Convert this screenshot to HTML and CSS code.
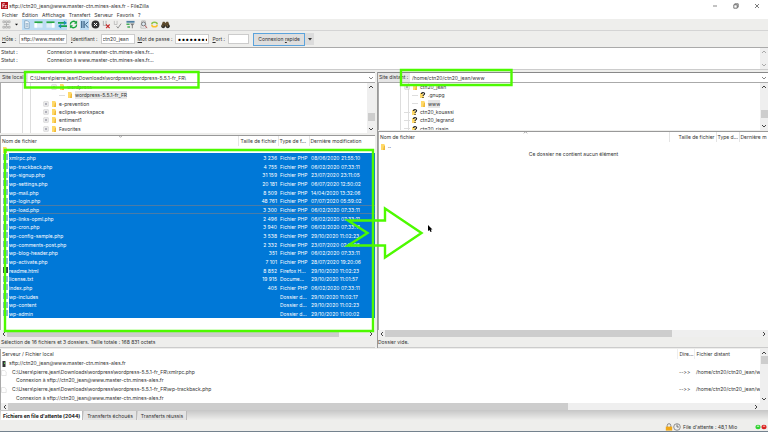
FILE: index.html
```html
<!DOCTYPE html>
<html lang="fr">
<head>
<meta charset="utf-8">
<title>sftp://ctn20_jean@www.master-ctn.mines-ales.fr - FileZilla</title>
<link rel="stylesheet" href="styles.css">
</head>
<body>
<svg class="defs" aria-hidden="true">
  <symbol id="up" viewBox="0 0 6 6"><path d="M1 4 3 2l2 2" fill="none" stroke="currentColor"/></symbol>
  <symbol id="down" viewBox="0 0 6 6"><path d="M1 2l2 2 2-2" fill="none" stroke="currentColor"/></symbol>
  <symbol id="left" viewBox="0 0 6 6"><path d="M4 1 2 3l2 2" fill="none" stroke="currentColor"/></symbol>
  <symbol id="right" viewBox="0 0 6 6"><path d="M2 1l2 2-2 2" fill="none" stroke="currentColor"/></symbol>
  <symbol id="folder" viewBox="0 0 6 6"><path d="M1 0h3l1 1v5H1z" fill="#ffd968"/><path d="M4 2h1v4H3z" fill="#f0b93a"/></symbol>
  <symbol id="plus" viewBox="0 0 6 6"><path d="M.8.8h4.4v4.4H.8z" fill="#fff" stroke="#bbb" stroke-width=".6"/><path d="M1.8 3h2.4M3 1.8v2.4" stroke="#667" stroke-width=".6"/></symbol>
  <symbol id="ask" viewBox="0 0 6 6"><path d="M0 1h3l1 5H0z" fill="#ffd968"/><path d="M1.4 2C1.4.2 4.6.2 4.6 1.8 4.6 3 3 2.8 3 4.1M3 4.9v1" fill="none" stroke="#222" stroke-width="1.1"/></symbol>
  <symbol id="page" viewBox="0 0 6 6"><path d="M.5.5h3.2l1.5 1.4v3.6H.5z" fill="#fff" stroke="#ccc" stroke-width=".5"/></symbol>
</svg>
<div class="window">
  <header class="titlebar">
    <svg class="logo" viewBox="0 0 8 8"><path d="M0 0h8v8H0z" fill="#b5121b"/><path d="M2 6.5V2h2.4M2 4h2M4.6 4H6.4L4.4 6.4h2.2" fill="none" stroke="#fff" stroke-width=".8"/></svg>
    <h1>sftp://ctn20_jean@www.master-ctn.mines-ales.fr - FileZilla</h1>
    <div class="winbtns">
      <button aria-label="Réduire"><svg viewBox="0 0 6 6"><path d="M1 3h4" stroke="#555" stroke-width=".7"/></svg></button>
      <button aria-label="Restaurer"><svg viewBox="0 0 6 6"><path d="M.8 1.8h3.4v3.4H.8zM1.8 1.6V.8h3.4v3.4h-.8" fill="none" stroke="#444" stroke-width=".7"/></svg></button>
      <button aria-label="Fermer"><svg viewBox="0 0 6 6"><path d="M1 1l4 4M5 1 1 5" stroke="#444" stroke-width=".7"/></svg></button>
    </div>
  </header>
  <nav class="menu">
    <button>Fichier</button><button>Édition</button><button>Affichage</button><button>Transfert</button><button>Serveur</button><button>Favoris</button><button>?</button>
  </nav>
  <div class="toolbar">
    <button aria-label="Gestionnaire de sites"><svg viewBox="0 0 10 10"><path d="M1 1h2v2H1zM4 1h2v2H4zM7 1h2v2H7zM1 7h2v2H1zM4 7h2v2H4zM7 7h2v2H7zM2 5h6M5 3v4" fill="none" stroke="#999" stroke-width=".7"/></svg></button>
    <button class="caret" aria-label="Liste des sites"><svg viewBox="0 0 4 10"><path d="M0 4h4L2 6.4z" fill="#111"/></svg></button>
    <div class="toggles">
      <button aria-label="Journal"><svg viewBox="0 0 10 10"><path d="M3 .8h3l2 2v6.4H3z" fill="#eef5fb" stroke="#6b90ad" stroke-width=".7"/><path d="M4 4h3M4 5.5h3M4 7h3" stroke="#5585a8" stroke-width=".6"/></svg></button>
      <button aria-label="Arborescence locale"><svg viewBox="0 0 10 10"><path d="M.5 1.5h9v7h-9z" fill="#dfeefa"/><path d="M.5 1.5h9v2h-9z" fill="#27a844"/><path d="M.5 3.5h3v5h-3z" fill="#fff"/></svg></button>
      <button aria-label="Arborescence distante"><svg viewBox="0 0 10 10"><path d="M.5 1.5h9v7h-9z" fill="#dfeefa"/><path d="M.5 1.5h9v2h-9z" fill="#27a844"/><path d="M6.500 3.500h3v5h-3z" fill="#fff"/></svg></button>
      <button aria-label="File d'attente"><svg viewBox="0 0 10 10"><path d="M0 3.200h8M2 6.800h8" stroke="#19a34a" stroke-width="2"/><path d="M6.500 .6v5L10 3.200zM3.500 4.400V9.400L0 6.800z" fill="#1a8fb0"/></svg></button>
    </div>
    <button aria-label="Actualiser"><svg viewBox="0 0 10 10"><path d="M1.500 5a3.500 3.500 0 0 1 6-2.500M8.500 5a3.500 3.500 0 0 1-6 2.500" fill="none" stroke="#1aa53c" stroke-width="1.500"/><path d="M9 .6v3.600H5.600zM1 9.400V5.800h3.400z" fill="#1aa53c"/></svg></button>
    <button class="on" aria-label="Traiter la file"><svg viewBox="0 0 10 10"><path d="M2 1v8M4.500 1v8" stroke="#234e73" stroke-width="1.200"/><path d="M6 5l3-3M6 5l3 3.500" stroke="#234e73"/></svg></button>
    <button aria-label="Annuler"><svg viewBox="0 0 10 10"><circle cx="5" cy="5" r="4.400" fill="#333"/><path d="M3.300 3.300l3.400 3.400M6.700 3.300 3.300 6.700" stroke="#fff" stroke-width="1.100"/></svg></button>
    <button aria-label="Déconnecter"><svg viewBox="0 0 10 10"><path d="M1.500 1v5h3V1" fill="none" stroke="#999" stroke-width=".8"/><path d="M4.500 5l4 4M8.500 5l-4 4" stroke="#c62828" stroke-width="1.200"/></svg></button>
    <button aria-label="Reconnecter"><svg viewBox="0 0 10 10"><path d="M1.500 1v4h3V1" fill="none" stroke="#aaa" stroke-width=".7"/><path d="M4 7l1.500 2L9 4" fill="none" stroke="#888"/></svg></button>
    <button class="gap" aria-label="Filtres"><svg viewBox="0 0 10 10"><path d="M.5 1h9v2h-9z" fill="#4d7fa3"/><path d="M.5 4h3.500v1.600H.5zM1.500 7h3v1.500h-3z" fill="#49ad58"/><path d="M4.500 4h5L7.500 6v3.200h-1V6z" fill="#777"/></svg></button>
    <button class="gap" aria-label="Rechercher"><svg viewBox="0 0 10 10"><path d="M2 9 3 1h4l1 8z" fill="#f2f2f2" stroke="#999" stroke-width=".6"/><circle cx="5" cy="4.400" r="2.200" fill="#dce9f2" stroke="#555" stroke-width=".8"/><path d="M6.500 6 9 9" stroke="#b55"/></svg></button>
    <button aria-label="Synchroniser"><svg viewBox="0 0 10 10"><path d="M2 4.800a3 2.400 0 0 1 6 0" fill="none" stroke="#8bc34a" stroke-width="1.600"/><path d="M8 5.200a3 2.400 0 0 1-6 0" fill="none" stroke="#fbc02d" stroke-width="1.600"/></svg></button>
    <button aria-label="Trouver"><svg viewBox="0 0 10 10"><path d="M2 2h2l.6 1h.8L6 2h2l1.800 5H.2z" fill="#5f4b2c"/><circle cx="2.500" cy="7" r="2.100" fill="#33302b"/><circle cx="7.500" cy="7" r="2.100" fill="#33302b"/><path d="M1.500 6.500h1.200M6.500 6.500h1.200" stroke="#d6a545" stroke-width=".8"/></svg></button>
  </div>
  <form class="quick">
    <label for="host"><u>H</u>ôte :</label><input id="host" class="w-host" value="sftp://www.master">
    <label for="user"><u>I</u>dentifiant :</label><input id="user" class="w-user" value="ctn20_jean">
    <label for="pass"><u>M</u>ot de passe :</label><input id="pass" class="w-pass" type="password" value="motdepass">
    <label for="port"><u>P</u>ort :</label><input id="port" class="w-port">
    <button type="button" class="connect">Connexion <u>r</u>apide</button><button type="button" class="drop" aria-label="Historique"><svg viewBox="0 0 6 6"><path d="M1 2h4L3 4.400z" fill="#333"/></svg></button>
  </form>
  <section class="log">
    <dl>
      <dt>Statut :</dt><dd>Connexion à www.master-ctn.mines-ales.fr...</dd>
      <dt>Statut :</dt><dd>Connexion à www.master-ctn.mines-ales.fr...</dd>
    </dl>
    <div class="vbar pale"><svg><use href="#up"/></svg><span class="grow"></span><svg><use href="#down"/></svg></div>
  </section>
  <main class="panes">
    <section class="pane local">
      <div class="site"><label for="lsite">Site local :</label><select id="lsite"><option>C:\Users\pierre.jean\Downloads\wordpress\wordpress-5.5.1-fr_FR\</option></select><svg class="chev"><use href="#down"/></svg></div>
      <div class="tree">
        <ul>
          <li class="d2"><svg><use href="#plus"/></svg><svg><use href="#folder"/></svg><span>wordpress</span></li>
          <li class="d3"><i></i><svg><use href="#folder"/></svg><span class="sel">wordpress-5.5.1-fr_FR</span></li>
          <li class="d1"><svg><use href="#plus"/></svg><svg><use href="#folder"/></svg><span>e-prevention</span></li>
          <li class="d1"><svg><use href="#plus"/></svg><svg><use href="#folder"/></svg><span>eclipse-workspace</span></li>
          <li class="d1"><svg><use href="#plus"/></svg><svg><use href="#folder"/></svg><span>entiment1</span></li>
          <li class="d1"><svg><use href="#plus"/></svg><svg><use href="#folder"/></svg><span>Favorites</span></li>
        </ul>
        <div class="vbar"><svg><use href="#up"/></svg><span class="grow"></span><b class="thumb"></b><span class="foot"></span><svg><use href="#down"/></svg></div>
      </div>
      <div class="files">
        <table>
          <colgroup><col class="c-icon"><col><col class="c-size"><col class="c-type"><col class="c-date"></colgroup>
          <thead><tr><th colspan="2">Nom de fichier<svg class="sort"><use href="#down"/></svg></th><th class="num">Taille de fichier</th><th>Type de f...</th><th>Dernière modification</th></tr>
          <tr class="parent"><td colspan="5"><svg><use href="#folder"/></svg></td></tr></thead>
          <tbody>
            <tr><td></td><td>xmlrpc.php</td><td>3 236</td><td>Fichier PHP</td><td>08/06/2020 21:55:10</td></tr>
            <tr><td></td><td>wp-trackback.php</td><td>4 755</td><td>Fichier PHP</td><td>06/02/2020 07:33:11</td></tr>
            <tr><td></td><td>wp-signup.php</td><td>31 159</td><td>Fichier PHP</td><td>23/07/2020 23:11:05</td></tr>
            <tr><td></td><td>wp-settings.php</td><td>20 181</td><td>Fichier PHP</td><td>06/07/2020 12:50:02</td></tr>
            <tr><td></td><td>wp-mail.php</td><td>8 509</td><td>Fichier PHP</td><td>14/04/2020 13:32:06</td></tr>
            <tr><td></td><td>wp-login.php</td><td>48 761</td><td>Fichier PHP</td><td>07/07/2020 05:59:02</td></tr>
            <tr class="focus"><td></td><td>wp-load.php</td><td>3 300</td><td>Fichier PHP</td><td>06/02/2020 07:33:11</td></tr>
            <tr><td></td><td>wp-links-opml.php</td><td>2 496</td><td>Fichier PHP</td><td>06/02/2020 07:33:11</td></tr>
            <tr><td></td><td>wp-cron.php</td><td>3 940</td><td>Fichier PHP</td><td>06/02/2020 07:33:11</td></tr>
            <tr><td></td><td>wp-config-sample.php</td><td>3 538</td><td>Fichier PHP</td><td>29/10/2020 11:02:23</td></tr>
            <tr><td></td><td>wp-comments-post.php</td><td>2 332</td><td>Fichier PHP</td><td>23/07/2020 02:11:05</td></tr>
            <tr><td></td><td>wp-blog-header.php</td><td>351</td><td>Fichier PHP</td><td>06/02/2020 07:33:11</td></tr>
            <tr><td></td><td>wp-activate.php</td><td>7 101</td><td>Fichier PHP</td><td>28/07/2020 19:20:06</td></tr>
            <tr class="html"><td></td><td>readme.html</td><td>8 852</td><td>Firefox H...</td><td>29/10/2020 11:02:23</td></tr>
            <tr><td></td><td>license.txt</td><td>19 915</td><td>Docume...</td><td>29/10/2020 11:01:57</td></tr>
            <tr><td></td><td>index.php</td><td>405</td><td>Fichier PHP</td><td>06/02/2020 07:33:11</td></tr>
            <tr><td></td><td>wp-includes</td><td></td><td>Dossier d...</td><td>29/10/2020 11:02:17</td></tr>
            <tr><td></td><td>wp-content</td><td></td><td>Dossier d...</td><td>29/10/2020 11:02:23</td></tr>
            <tr><td></td><td>wp-admin</td><td></td><td>Dossier d...</td><td>29/10/2020 11:00:02</td></tr>
          </tbody>
        </table>
      </div>
      <div class="hbar"><svg><use href="#left"/></svg><b class="t-local"></b><span class="grow"></span><svg><use href="#right"/></svg></div>
      <p class="state">Sélection de 16 fichiers et 3 dossiers. Taille totale : 168 831 octets</p>
    </section>
    <section class="pane remote">
      <div class="site"><label for="rsite">Site distant :</label><select id="rsite"><option>/home/ctn20/ctn20_jean/www</option></select><svg class="chev"><use href="#down"/></svg></div>
      <div class="tree">
        <ul>
          <li class="d1"><svg><use href="#plus"/></svg><svg><use href="#folder"/></svg><span>ctn20_jean</span></li>
          <li class="d2"><i></i><svg><use href="#ask"/></svg><span>.gnupg</span></li>
          <li class="d2"><i></i><svg><use href="#folder"/></svg><span class="sel">www</span></li>
          <li class="d1"><i></i><svg><use href="#ask"/></svg><span>ctn20_kouassi</span></li>
          <li class="d1"><i></i><svg><use href="#ask"/></svg><span>ctn20_legrand</span></li>
          <li class="d1"><i></i><svg><use href="#ask"/></svg><span>ctn20_rissin</span></li>
        </ul>
        <div class="vbar"><svg><use href="#up"/></svg><span class="grow"></span><b class="thumb"></b><span class="foot"></span><svg><use href="#down"/></svg></div>
      </div>
      <div class="files">
        <table>
          <colgroup><col><col class="c-size"><col class="c-type"><col class="c-date"></colgroup>
          <thead><tr><th>Nom de fichier<svg class="sort"><use href="#up"/></svg></th><th class="num">Taille de fichier</th><th>Type d...</th><th>Dernière m</th></tr></thead>
          <tbody><tr><td colspan="4"><svg><use href="#folder"/></svg>..</td></tr></tbody>
        </table>
        <p class="empty">Ce dossier ne contient aucun élément</p>
      </div>
      <div class="hbar"><svg><use href="#left"/></svg><b class="t-remote"></b><span class="grow"></span><svg><use href="#right"/></svg></div>
      <p class="state">Dossier vide.</p>
    </section>
  </main>
  <section class="queue">
    <div class="qmain">
      <table>
        <colgroup><col><col class="q-dir"><col class="q-remote"></colgroup>
        <thead><tr><th>Serveur / Fichier local</th><th>Dire...</th><th>Fichier distant</th></tr></thead>
        <tbody>
          <tr><td><svg viewBox="0 0 6 6"><path d="M1.500 0h3v6h-3z" fill="#333"/><path d="M3 1.500h1V3H3z" fill="#5c5"/></svg>sftp://ctn20_jean@www.master-ctn.mines-ales.fr</td><td></td><td></td></tr>
          <tr><td><svg class="wide"><use href="#page"/></svg>C:\Users\pierre.jean\Downloads\wordpress\wordpress-5.5.1-fr_FR\xmlrpc.php</td><td>--&gt;&gt;</td><td>/home/ctn20/ctn20_jean/w</td></tr>
          <tr><td class="sub">Connexion à sftp://ctn20_jean@www.master-ctn.mines-ales.fr</td><td></td><td></td></tr>
          <tr><td><svg class="wide"><use href="#page"/></svg>C:\Users\pierre.jean\Downloads\wordpress\wordpress-5.5.1-fr_FR\wp-trackback.php</td><td>--&gt;&gt;</td><td>/home/ctn20/ctn20_jean/w</td></tr>
          <tr><td class="sub">Connexion à sftp://ctn20_jean@www.master-ctn.mines-ales.fr</td><td></td><td></td></tr>
        </tbody>
      </table>
      <div class="vbar"><svg><use href="#up"/></svg><b class="thumb"></b><span class="grow"></span><svg><use href="#down"/></svg></div>
    </div>
    <div class="hbar"><svg><use href="#left"/></svg><b class="t-queue"></b><span class="grow"></span><svg><use href="#right"/></svg></div>
  </section>
  <div class="tabs"><button class="active">Fichiers en file d'attente (2044)</button><button>Transferts échoués</button><button>Transferts réussis</button></div>
  <footer class="statusbar">
    <svg viewBox="0 0 8 8"><path d="M2.200 4V2.500a1.800 1.800 0 0 1 3.600 0V4" fill="none" stroke="#888"/><path d="M.8 3.600h6.400v4H.8z" fill="#f0a818"/></svg>
    <svg viewBox="0 0 8 8"><circle cx="4" cy="4" r="3.300" fill="#eee" stroke="#777" stroke-width=".8"/><path d="M4 4V1.500M4 4h1.800" stroke="#555" stroke-width=".8"/></svg>
    <span class="total">File d'attente : 48,1 Mio</span>
    <svg class="led" viewBox="0 0 6 6"><ellipse cx="3" cy="3" rx="2.600" ry="2.200" fill="#2fd12f"/><ellipse cx="3" cy="2.200" rx="1.300" ry=".7" fill="#b5f5b0"/></svg>
    <svg class="led" viewBox="0 0 6 6"><ellipse cx="3" cy="3" rx="2.600" ry="2.200" fill="#d82222"/><ellipse cx="3" cy="2.200" rx="1.300" ry=".7" fill="#f79a92"/></svg>
  </footer>
</div>
<svg class="marks" viewBox="0 0 768 432" preserveAspectRatio="none" aria-hidden="true">
  <g fill="none" stroke="#4dfa00" stroke-width="2.4">
    <path d="M25 72h173.500v15.500H25zM401 70h110.500v15H401zM5 150h368v181H5z"/>
    <path d="M348 220.500h37V208.500L421.500 233 385 257.500V245.500H348L367.500 233z"/>
  </g>
  <path d="M428 225v6l1.500-1 1 2 1.200-.6-1-2h1.800z" fill="#000"/>
</svg>
</body>
</html>
```
FILE: styles.css
```css
* { box-sizing: border-box; }
body { margin: 0; background: #fff; overflow: hidden; }
body, button, input, select, table { font: 5px/8px Inter, "Open Sans", sans-serif; font-feature-settings: "calt" 0; color: #333; }
button, input, select { border: 0; padding: 0; margin: 0; background: none; border-radius: 0; }
h1, p, ul, dl, dd { margin: 0; padding: 0; font-weight: 400; font-size: inherit; }
ul { list-style: none; }
svg { display: block; flex: none; width: 6px; height: 6px; }
.defs { position: absolute; width: 0; height: 0; }
.marks { position: absolute; inset: 0; width: 100%; height: 100%; pointer-events: none; }
.window { height: 100vh; display: flex; flex-direction: column; background: #eeeeec; border-bottom: 1px solid #74828e; }
.grow { flex: 1; }

.titlebar { display: flex; align-items: center; height: 11px; background: #fff; }
.logo { width: 7px; height: 7px; margin: 0 1px; }
.titlebar h1 { flex: 1; font-size: 5px; }
.winbtns { display: flex; gap: 15px; padding-right: 8px; }
.menu { display: flex; gap: 4px; height: 8px; padding-left: 2px; background: #fff; }

.toolbar { display: flex; align-items: center; gap: 2px; height: 12px; padding-left: 2px; border-bottom: 1px solid #d4d4d4; }
.toolbar svg { width: 9px; height: 9px; }
.toolbar .caret svg { width: 3px; }
.toolbar .caret { margin: 0 2px; }
.toggles { display: flex; gap: 3px; padding: 1px 0; background: #bcdcf4; }
.toolbar .on { padding: 1px 0; background: #bcdcf4; }
.toolbar .gap { margin-left: 2px; }

.quick { display: flex; align-items: center; height: 17px; padding-left: 2px; border-bottom: 1px solid #aaa; }
.quick input { height: 10px; padding: 0 1px; border: 1px solid #ccc; background: #fff; }
.quick label { margin-right: 3px; }
.quick .w-host { width: 48px; margin-right: 4px; }
.quick .w-user { width: 34px; margin-right: 3px; }
.quick .w-pass { width: 34px; margin-right: 3px; font-size: 7px; color: #000; }
.quick .w-port { width: 21px; margin-right: 4px; }
.connect { width: 52px; height: 13px; border: 1px solid #5ba3dc; background: #dedede; }
.drop { display: grid; place-items: center; width: 9px; height: 12px; background: #dcdcdc; }

.log { display: flex; height: 22px; margin-bottom: 2px; background: #fff; border-bottom: 1px solid #ccc; }
.log dl { flex: 1; display: grid; grid-template-columns: 46px 1fr; grid-auto-rows: 8px; padding-left: 1px; }
.vbar { display: flex; flex-direction: column; align-items: center; width: 8px; padding: 1px 0; background: #efefef; color: #444; }
.vbar.pale { color: #aaa; }
.thumb { width: 7px; height: 8px; background: #cdcdcd; }
.foot { height: 5px; }

.panes { flex: 1; min-height: 0; display: grid; grid-template-columns: 375fr 391fr; gap: 2px; }
.pane { display: flex; flex-direction: column; min-width: 0; min-height: 0; }
.pane + .pane { border-left: 1px solid #999; }
.site { display: flex; align-items: center; height: 11px; border-top: 1px solid #888; border-bottom: 1px solid #aaa; background: #fff; }
.site label { align-self: stretch; width: 28px; padding-left: 2px; background: #e6e6e6; }
.remote .site label { width: 32px; padding-left: 1px; }
.site select { flex: 1; min-width: 0; padding-left: 2px; appearance: none; }
.chev { margin-right: 1px; color: #888; }
.tree { display: flex; background: #fff; height: 50px; border-left: 1px solid #aaa; }
.remote .tree { height: 47px; }
.tree ul { flex: 1; height: 50px; display: grid; grid-template-rows: repeat(6, 1fr); clip-path: inset(0); background: linear-gradient(90deg, transparent 21px, #ddd 21px, #ddd 22px, transparent 22px, transparent 29px, #ddd 29px, #ddd 30px, transparent 30px); }
.remote .tree ul { clip-path: inset(0 0 3px); }
.tree li { display: flex; align-items: center; gap: 2px; padding-left: 42px; }
.tree .d2 { padding-left: 50px; }
.tree .d3 { padding-left: 58px; }
.remote .tree .d1 { padding-left: 25px; }
.remote .tree .d2 { padding-left: 33px; }
.tree i { width: 6px; height: 1px; background: #ddd; }
.sel { background: #e6e6e6; }
.files { flex: 1; min-height: 0; overflow: hidden; margin-top: 2px; background: #fff; border-top: 1px solid #999; border-left: 1px solid #aaa; }
.remote .files { margin-top: 1px; }

table { width: 100%; table-layout: fixed; border-collapse: collapse; white-space: nowrap; }
th, td { padding: 0; text-align: left; font-weight: 400; overflow: hidden; }
th { height: 10px; position: relative; padding-left: 1px; }
.files th + th { border-left: 1px solid #e4e4e4; }
.files .num { text-align: right; padding-right: 1px; }
.sort { position: absolute; top: -2px; width: 5px; height: 5px; color: #999; }
.local .sort { left: 117px; }
.remote .sort { left: 144px; }
.c-icon { width: 8px; }
.c-size { width: 40px; }
.c-type { width: 31px; }
.c-date { width: 66px; }
.parent td { height: 7px; padding-left: 1px; }
.local tbody { color: #fff; }
.local tbody tr { height: 9px; }
.local tbody tr:nth-child(3n) { height: 8px; }
.local tbody td { padding: 0 0 0 2px; line-height: 8px; background: #0078d7; }
.local tbody td:nth-child(1) { background: linear-gradient(#8bb4d8, #8bb4d8) 2px 1px / 5px 6px no-repeat; }
.local tbody .html td:nth-child(1) { background-image: linear-gradient(#345, #345); }
.local tbody td:nth-child(2) { padding-left: 0; }
.local tbody td:nth-child(3) { text-align: right; padding-right: 1px; }
.local .focus td + td { box-shadow: inset 0 1px #4a7ca8, inset 0 -1px #4a7ca8; }
.remote .c-size { width: 47px; }
.remote .c-type { width: 23px; }
.remote .c-date { width: 29px; }
.remote tbody td { padding-left: 1px; }
.remote td svg, .qmain td svg { display: inline-block; vertical-align: middle; margin-right: 2px; }
.empty { text-align: center; }

.hbar { display: flex; align-items: center; height: 7px; padding: 0 1px; background: #efefef; color: #444; }
.hbar b { align-self: stretch; background: #cdcdcd; }
.t-local { width: 89%; }
.t-remote { width: 74%; }
.t-queue { width: 74%; }
.state { height: 11px; line-height: 10px; padding-left: 1px; border-bottom: 1px solid #ccc; }
.remote .state { padding-left: 0; }

.queue { border-left: 1px solid #aaa; margin-top: 1px; }
.qmain { display: flex; background: #fff; height: 54px; }
.qmain table { flex: 1; height: 53px; }
.q-dir { width: 17px; }
.q-remote { width: 66px; }
.queue .hbar { padding-right: 9px; }
.qmain tr > * + * { padding-left: 2px; }
.qmain th { border-right: 1px solid #eee; }
.qmain th:last-child { border: 0; }
.qmain td svg.wide { margin-right: 5px; }
.qmain .sub { padding-left: 15px; }
.tabs { display: flex; height: 12px; background: linear-gradient(#c6c6c6, #eeeeec 10px); padding: 1px 0 2px 1px; }
.tabs button { padding: 0 3px; margin-right: 1px; background: #e4e4e4; border-right: 1px solid #bbb; }
.tabs .active { padding: 0 2px; background: #fff; font-weight: 700; color: #111; }
.statusbar { display: flex; align-items: center; justify-content: flex-end; height: 9px; padding-right: 1px; }
.statusbar svg { width: 8px; height: 8px; }
.statusbar .led { width: 6px; height: 6px; }
.total { width: 74px; padding-left: 2px; }
```
